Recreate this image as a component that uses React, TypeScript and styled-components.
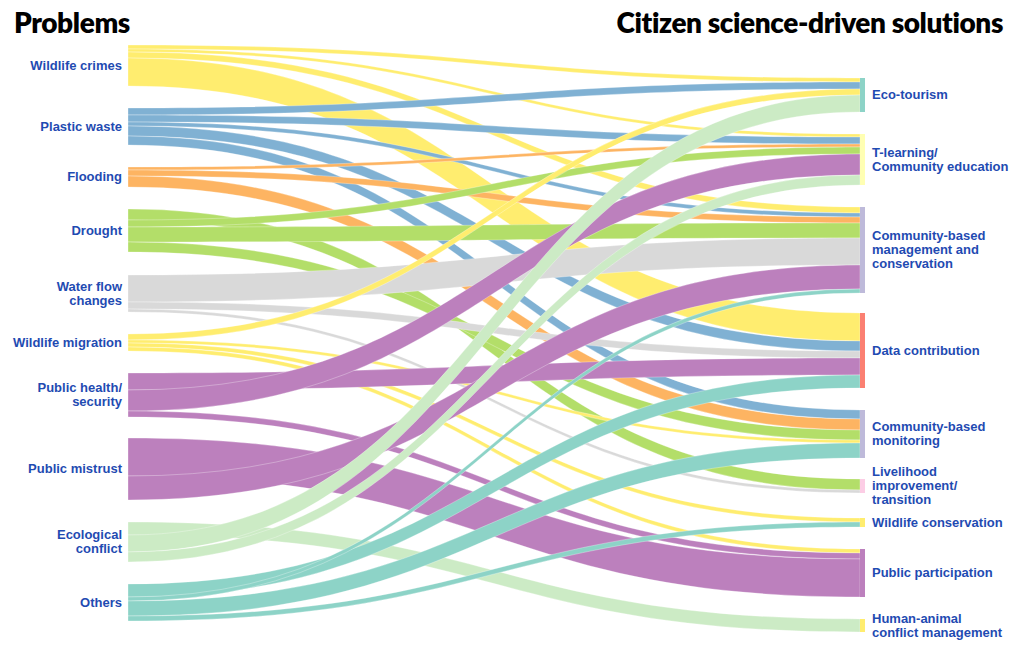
import styled, { createGlobalStyle } from 'styled-components';

const TOP = 42;
const X0 = 128;
const X1 = 860;
const XM = (X0 + X1) / 2;
const BAR = 5;

const YELLOW = '#ffed6f';
const BLUE = '#80b1d3';
const ORANGE = '#fdb462';
const GREEN = '#b3de69';
const GREY = '#d9d9d9';
const PURPLE = '#bc80bd';
const MINT = '#ccebc5';
const TEAL = '#8dd3c7';

type Source = { id: string; label: string[]; y: number; color: string; out: [string, number][] };
type Target = { id: string; label: string[]; y: number; color: string; from: string[] };

// links are listed in the order they leave each problem (top to bottom)
const SOURCES: Source[] = [
  { id: 'wc', label: ['Wildlife crimes'], y: 45, color: YELLOW, out: [['eco', 4], ['tl', 3], ['cbmc', 6], ['data', 28]] },
  { id: 'pw', label: ['Plastic waste'], y: 108, color: BLUE, out: [['eco', 7], ['tl', 7], ['cbmc', 4], ['data', 10], ['mon', 9]] },
  { id: 'fl', label: ['Flooding'], y: 167, color: ORANGE, out: [['tl', 3], ['cbmc', 6], ['mon', 11]] },
  { id: 'dr', label: ['Drought'], y: 209, color: GREEN, out: [['liv', 11], ['tl', 7], ['cbmc', 15], ['mon', 10]] },
  { id: 'wf', label: ['Water flow', 'changes'], y: 275, color: GREY, out: [['cbmc', 27], ['data', 7], ['liv', 3]] },
  { id: 'wm', label: ['Wildlife migration'], y: 334, color: YELLOW, out: [['eco', 6], ['mon', 3], ['wcons', 4], ['pp', 4]] },
  { id: 'ph', label: ['Public health/', 'security'], y: 373, color: PURPLE, out: [['data', 17], ['tl', 21], ['pp', 6]] },
  { id: 'pm', label: ['Public mistrust'], y: 438, color: PURPLE, out: [['pp', 38], ['cbmc', 24]] },
  { id: 'ec', label: ['Ecological', 'conflict'], y: 522, color: MINT, out: [['ha', 13], ['eco', 17], ['tl', 10]] },
  { id: 'ot', label: ['Others'], y: 584, color: TEAL, out: [['data', 13], ['cbmc', 4], ['mon', 15], ['wcons', 5]] },
];

// incoming links are stacked in the order of their sources
const TARGETS: Target[] = [
  { id: 'eco', label: ['Eco-tourism'], y: 78, color: '#8dd3c7', from: ['wc', 'pw', 'wm', 'ec'] },
  { id: 'tl', label: ['T-learning/', 'Community education'], y: 134, color: '#ffffb3', from: ['wc', 'pw', 'fl', 'dr', 'ph', 'ec'] },
  { id: 'cbmc', label: ['Community-based', 'management and', 'conservation'], y: 207, color: '#bebada', from: ['wc', 'pw', 'fl', 'dr', 'wf', 'pm', 'ot'] },
  { id: 'data', label: ['Data contribution'], y: 313, color: '#fb8072', from: ['wc', 'pw', 'wf', 'ph', 'ot'] },
  { id: 'mon', label: ['Community-based', 'monitoring'], y: 410, color: '#bebada', from: ['pw', 'fl', 'dr', 'wm', 'ot'] },
  { id: 'liv', label: ['Livelihood', 'improvement/', 'transition'], y: 479, color: '#fccde5', from: ['dr', 'wf'] },
  { id: 'wcons', label: ['Wildlife conservation'], y: 518, color: '#ffed6f', from: ['wm', 'ot'] },
  { id: 'pp', label: ['Public participation'], y: 549, color: '#bc80bd', from: ['wm', 'ph', 'pm'] },
  { id: 'ha', label: ['Human-animal', 'conflict management'], y: 619, color: '#ffed6f', from: ['ec'] },
];

type Ribbon = { key: string; color: string; a: number; b: number; w: number };

function valueOf(s: string, t: string) {
  const src = SOURCES.find(n => n.id === s);
  const link = src?.out.find(([id]) => id === t);
  return link ? link[1] : 0;
}

function buildRibbons(): Ribbon[] {
  const ends: Record<string, number> = {};
  TARGETS.forEach(t => {
    let y = t.y;
    t.from.forEach(s => {
      ends[`${s}-${t.id}`] = y;
      y += valueOf(s, t.id);
    });
  });
  const list: Ribbon[] = [];
  SOURCES.forEach(s => {
    let y = s.y;
    s.out.forEach(([t, w]) => {
      list.push({ key: `${s.id}-${t}`, color: s.color, a: y, b: ends[`${s.id}-${t}`], w });
      y += w;
    });
  });
  return list;
}

function ribbonPath({ a, b, w }: Ribbon) {
  return `M${X0},${a} C${XM},${a} ${XM},${b} ${X1},${b} L${X1},${b + w} C${XM},${b + w} ${XM},${a + w} ${X0},${a + w} Z`;
}

const total = (vals: number[]) => vals.reduce((p, v) => p + v, 0);
const sourceHeight = (s: Source) => total(s.out.map(([, v]) => v));
const targetHeight = (t: Target) => total(t.from.map(s => valueOf(s, t.id)));

export default function App() {
  const ribbons = buildRibbons();

  return (
    <>
      <GlobalStyle />
      <Page>
        <Header>
          <Title>Problems</Title>
          <Title>Citizen science-driven solutions</Title>
        </Header>
        <Chart>
          <Flows viewBox={`0 ${TOP} 1024 ${648 - TOP}`} width="1024" height={648 - TOP}>
            {ribbons.map(r => (
              <Ribbon key={r.key} d={ribbonPath(r)} fill={r.color} />
            ))}
            {TARGETS.map(t => (
              <rect key={t.id} x={X1} y={t.y} width={BAR} height={targetHeight(t)} fill={t.color} />
            ))}
          </Flows>
          {SOURCES.map(s => (
            <Label key={s.id} $side="left" style={{ top: s.y + sourceHeight(s) / 2 - TOP }}>
              {s.label.map(line => <div key={line}>{line}</div>)}
            </Label>
          ))}
          {TARGETS.map(t => (
            <Label key={t.id} $side="right" style={{ top: t.y + targetHeight(t) / 2 - TOP }}>
              {t.label.map(line => <div key={line}>{line}</div>)}
            </Label>
          ))}
        </Chart>
      </Page>
    </>
  );
}

const GlobalStyle = createGlobalStyle`
  html, body {
    margin: 0;
    padding: 0;
    background: #ffffff;
  }
`;

const Page = styled.div`
  width: 1024px;
  height: 648px;
  display: flex;
  flex-direction: column;
  background: #ffffff;
  overflow: hidden;
`;

const Header = styled.div`
  height: ${TOP}px;
  display: flex;
  align-items: center;
  justify-content: space-between;
  padding: 2px 21px 0 14px;
  box-sizing: border-box;
  flex-shrink: 0;
`;

const Title = styled.h1`
  margin: 0;
  font-family: Lato, 'Open Sans', sans-serif;
  font-size: 28px;
  font-weight: 800;
  line-height: 34px;
  color: #000000;
  letter-spacing: -0.4px;
`;

const Chart = styled.div`
  position: relative;
  flex: 1;
`;

const Flows = styled.svg`
  display: block;
`;

const Ribbon = styled.path`
  stroke: #ffffff;
  stroke-width: 0.5;
  stroke-opacity: 0.6;
`;

const Label = styled.div<{ $side: 'left' | 'right' }>`
  position: absolute;
  transform: translateY(-50%);
  ${({ $side }) => ($side === 'left' ? 'right: 902px; text-align: right;' : 'left: 872px; text-align: left;')}
  font-family: 'Liberation Sans', Arial, sans-serif;
  font-size: 13px;
  font-weight: 700;
  line-height: 14px;
  color: #1f4bb2;
  white-space: nowrap;
`;
